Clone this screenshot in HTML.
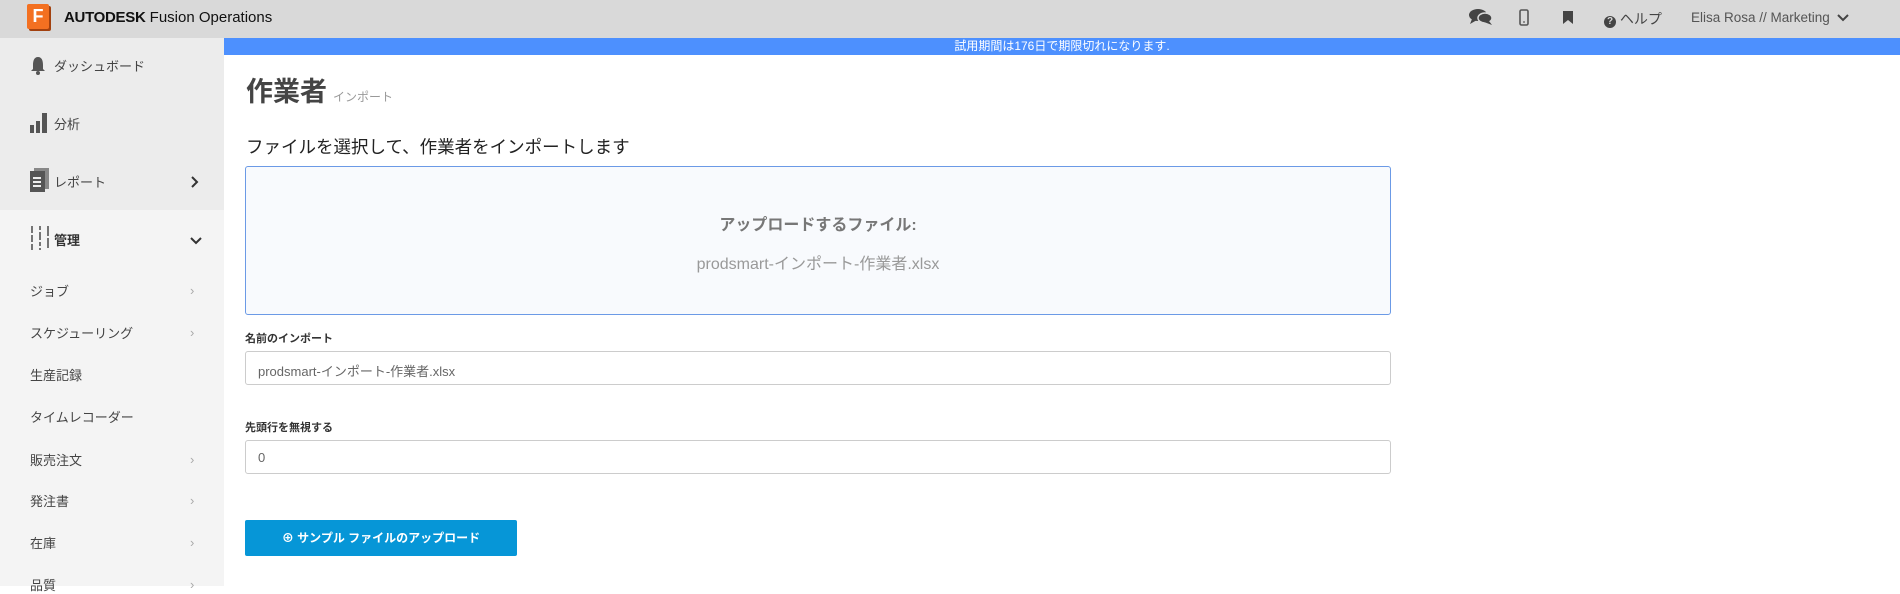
<!DOCTYPE html>
<html><head><meta charset="utf-8"><style>
*{box-sizing:border-box;margin:0;padding:0}
body{width:1900px;height:586px;overflow:hidden;background:#fff;font-family:"Liberation Sans","Noto Sans CJK JP",sans-serif;color:#333;position:relative}
.hdr{position:absolute;left:0;top:0;width:1900px;height:38px;background:#d9d9d9}
.logo{position:absolute;left:27px;top:4px;width:22px;height:25px;background:#f37021;border-radius:2px;color:#fff;font-weight:bold;font-size:18px;text-align:center;line-height:25px;box-shadow:2px 2px 0 #a2410f}
.brand{position:absolute;left:64px;top:9px;font-size:15px;color:#111}
.brand b{letter-spacing:-0.3px}
.ri{position:absolute;top:10px;font-size:14px;color:#444}
.side{position:absolute;left:0;top:38px;width:224px;height:548px;background:#f4f4f4}
.side .top{position:absolute;left:0;top:0;width:224px;height:172px;background:#ececec}
.it{position:absolute;left:30px;font-size:13px;color:#444}
.sub{position:absolute;left:30px;font-size:13px;color:#444}
.arr{position:absolute;left:190px;color:#aaa;font-size:13px;margin-top:2px}
.banner{position:absolute;left:224px;top:38px;width:1676px;height:17px;background:#4d90fe;color:#fff;font-size:12px;text-align:center;line-height:17px}
.title{position:absolute;left:246px;top:70px;font-size:27px;font-weight:bold;color:#444}
.title span{font-size:12px;font-weight:normal;color:#999;margin-left:6px}
.subt{position:absolute;left:246px;top:134px;font-size:17.5px;color:#222}
.box{position:absolute;left:245px;top:166px;width:1146px;height:149px;background:#f8fafd;border:1px solid #6b9ae6;border-radius:3px;text-align:center}
.lbl{position:absolute;left:245px;font-size:11px;font-weight:bold;color:#333}
.inp{position:absolute;left:245px;width:1146px;height:34px;border:1px solid #ccc;border-radius:3px;font-size:13px;color:#666;padding:9px 12px}
.btn{position:absolute;left:245px;top:520px;width:272px;height:36px;background:#0696d7;border-radius:2px;color:#fff;font-size:12px;font-weight:bold;text-align:center;line-height:36px}
</style></head><body>
<div class="hdr">
<div class="logo">F</div>
<div class="brand"><b>AUTODESK</b> Fusion Operations</div>
<svg style="position:absolute;left:1469px;top:8px" width="24" height="18" viewBox="0 0 24 18"><ellipse cx="9" cy="7" rx="9" ry="6" fill="#444"/><path d="M3 11 L1 16 L8 12Z" fill="#444"/><ellipse cx="16" cy="10" rx="7" ry="5" fill="#444" stroke="#d9d9d9" stroke-width="1.5"/><path d="M20 13 L23 17 L15 14Z" fill="#444"/></svg>
<svg style="position:absolute;left:1519px;top:9px" width="10" height="17"><rect x="1" y="1" width="8" height="15" rx="1.5" fill="none" stroke="#555" stroke-width="1.6"/><circle cx="5" cy="13" r="0.9" fill="#555"/></svg>
<svg style="position:absolute;left:1563px;top:11px" width="10" height="13"><path d="M0 0H10V13L5 9L0 13Z" fill="#444"/></svg>
<div class="ri" style="left:1604px;top:9px"><span style="display:inline-block;width:12px;height:12px;border-radius:50%;background:#444;color:#d9d9d9;font-size:10px;font-weight:bold;text-align:center;line-height:12px;vertical-align:0px">?</span> ヘルプ</div>
<div class="ri" style="left:1691px;font-size:13.5px;color:#555;top:10px">Elisa Rosa // Marketing</div>
<svg style="position:absolute;left:1837px;top:14px" width="12" height="8"><path d="M1 1L6 6L11 1" fill="none" stroke="#444" stroke-width="2"/></svg>
</div>
<div class="banner">試用期間は176日で期限切れになります.</div>
<div class="side"><div class="top"></div>
<svg style="position:absolute;left:30px;top:18px" width="16" height="20"><path d="M8 1C4 1 3 5 3 9V13L1 15H15L13 13V9C13 5 12 1 8 1Z" fill="#555"/><circle cx="8" cy="17" r="2" fill="#555"/></svg>
<div class="it" style="left:54px;top:18px">ダッシュボード</div>
<svg style="position:absolute;left:30px;top:74px" width="20" height="21"><rect x="0" y="13" width="4" height="8" fill="#555"/><rect x="6" y="9" width="4" height="12" fill="#555"/><rect x="12" y="1" width="5" height="20" fill="#555"/></svg>
<div class="it" style="left:54px;top:76px">分析</div>
<svg style="position:absolute;left:30px;top:130px" width="20" height="24"><rect x="4" y="0" width="15" height="21" fill="#888"/><rect x="0" y="3" width="15" height="21" fill="#555"/><rect x="3" y="9" width="8" height="2" fill="#eee"/><rect x="3" y="13" width="8" height="2" fill="#eee"/><rect x="3" y="17" width="8" height="2" fill="#eee"/></svg>
<div class="it" style="left:54px;top:134px">レポート</div>
<svg style="position:absolute;left:191px;top:138px" width="8" height="12"><path d="M1 1L6 6L1 11" fill="none" stroke="#333" stroke-width="2"/></svg>
<svg style="position:absolute;left:30px;top:188px" width="20" height="24"><g stroke="#555" stroke-width="1.6"><line x1="2" y1="0" x2="2" y2="24" stroke-dasharray="7 2"/><line x1="10" y1="0" x2="10" y2="24" stroke-dasharray="4 2 8 2"/><line x1="18" y1="0" x2="18" y2="24" stroke-dasharray="10 2"/></g></svg>
<div class="it" style="left:54px;top:192px;font-weight:bold;color:#333">管理</div>
<svg style="position:absolute;left:190px;top:199px" width="12" height="8"><path d="M1 1L6 6L11 1" fill="none" stroke="#333" stroke-width="2"/></svg>
<div class="sub" style="top:243px">ジョブ</div><div class="arr" style="top:243px">›</div>
<div class="sub" style="top:285px">スケジューリング</div><div class="arr" style="top:285px">›</div>
<div class="sub" style="top:327px">生産記録</div>
<div class="sub" style="top:369px">タイムレコーダー</div>
<div class="sub" style="top:412px">販売注文</div><div class="arr" style="top:412px">›</div>
<div class="sub" style="top:453px">発注書</div><div class="arr" style="top:453px">›</div>
<div class="sub" style="top:495px">在庫</div><div class="arr" style="top:495px">›</div>
<div class="sub" style="top:537px">品質</div><div class="arr" style="top:537px">›</div>
</div>
<div class="title">作業者<span>インポート</span></div>
<div class="subt">ファイルを選択して、作業者をインポートします</div>
<div class="box"><div style="margin-top:44px;font-size:16px;font-weight:bold;color:#777">アップロードするファイル:</div><div style="margin-top:15px;font-size:16px;color:#999">prodsmart-インポート-作業者.xlsx</div></div>
<div class="lbl" style="top:330px">名前のインポート</div>
<div class="inp" style="top:351px">prodsmart-インポート-作業者.xlsx</div>
<div class="lbl" style="top:419px">先頭行を無視する</div>
<div class="inp" style="top:440px">0</div>
<div class="btn">⊕ サンプル ファイルのアップロード</div>
</body></html>
